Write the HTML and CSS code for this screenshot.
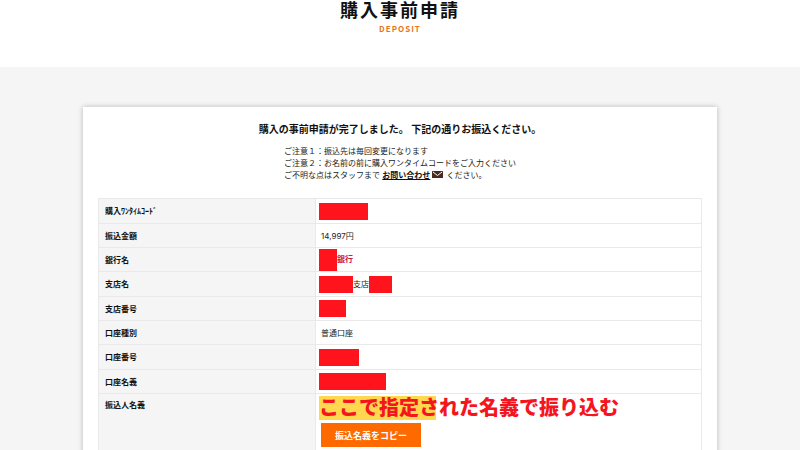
FILE: index.html
```html
<!DOCTYPE html>
<html lang="ja">
<head>
  <meta charset="UTF-8" />
  <meta name="viewport" content="width=device-width, initial-scale=1.0"/>
  <title>購入事前申請</title>
  <link rel="stylesheet" href="styles.css">
</head>
<body>
  <header class="page-header">
    <h1>購入事前申請</h1>
    <p class="sub">DEPOSIT</p>
  </header>

  <main class="content">
    <section class="card">
      <h2>購入の事前申請が完了しました。 下記の通りお振込ください。</h2>
      <div class="notes">
        <p>ご注意１：振込先は毎回変更になります</p>
        <p>ご注意２：お名前の前に購入ワンタイムコードをご入力ください</p>
        <p>ご不明な点はスタッフまで <a href="#contact">お問い合わせ<svg class="mail" viewBox="0 0 22 14" aria-hidden="true"><rect width="22" height="14" rx="1" fill="#4a2a1c"/><path d="M2 2L11 9L20 2" fill="none" stroke="#fff" stroke-width="2"/></svg></a> ください。</p>
      </div>

      <table class="info">
        <tr class="tall">
          <th scope="row">購入ﾜﾝﾀｲﾑｺｰﾄﾞ</th>
          <td><span class="mask mask-code"></span></td>
        </tr>
        <tr>
          <th scope="row">振込金額</th>
          <td>14,997円</td>
        </tr>
        <tr>
          <th scope="row">銀行名</th>
          <td class="bank"><span class="mask mask-bank"></span>銀行</td>
        </tr>
        <tr class="tall">
          <th scope="row">支店名</th>
          <td><span class="mask mask-branch"></span>支店<span class="mask mask-branch-code"></span></td>
        </tr>
        <tr>
          <th scope="row">支店番号</th>
          <td><span class="mask mask-branch-no"></span></td>
        </tr>
        <tr>
          <th scope="row">口座種別</th>
          <td>普通口座</td>
        </tr>
        <tr class="tall">
          <th scope="row">口座番号</th>
          <td><span class="mask mask-account"></span></td>
        </tr>
        <tr>
          <th scope="row">口座名義</th>
          <td><span class="mask mask-holder"></span></td>
        </tr>
        <tr class="sender">
          <th scope="row">振込人名義</th>
          <td>
            <p class="callout">ここで指定された名義で振り込む</p>
            <button type="button" class="copy-btn">振込名義をコピー</button>
          </td>
        </tr>
      </table>
    </section>
  </main>
</body>
</html>
```

FILE: styles.css
```css
* {
  box-sizing: border-box;
}
body {
  margin: 0;
  height: 100vh;
  overflow: hidden;
  font-family: Inter, "Noto Sans CJK JP", sans-serif;
  font-size: 8px;
  line-height: 12px;
  color: #222;
  background: #f5f5f5;
}
h1, h2, p {
  margin: 0;
}
.page-header {
  height: 67px;
  background: #fff;
  text-align: center;
}
.page-header h1 {
  font-size: 18px;
  line-height: 22px;
  letter-spacing: 2px;
  color: #111;
}
.page-header .sub {
  font-family: "Noto Sans CJK JP", sans-serif;
  font-size: 8px;
  line-height: 14px;
  font-weight: 700;
  letter-spacing: 1px;
  color: #e8751a;
}
.content {
  padding: 40px 83px;
}
.card {
  padding: 14px 15px 40px;
  background: #fff;
  box-shadow: 0 0 5px rgba(0, 0, 0, 0.25);
}
.card h2 {
  font-size: 10px;
  line-height: 16px;
  text-align: center;
  color: #111;
}
.notes {
  width: fit-content;
  margin: 8px auto 17px;
}
.notes a {
  color: #111;
  font-weight: 700;
}
.mail {
  width: 11px;
  height: 7px;
  margin: 0 1px 0 2px;
}
.info {
  width: 100%;
  table-layout: fixed;
  border-collapse: collapse;
}
.info th,
.info td {
  height: 24px;
  padding: 0 6px;
  border: 1px solid #e9e9e9;
  text-align: left;
  vertical-align: middle;
}
.info td {
  padding-left: 5px;
}
.info th {
  width: 36%;
  background: #f5f5f5;
  color: #111;
}
.info .tall th,
.info .tall td {
  height: 25px;
}
.info .bank {
  color: #c8203c;
  font-weight: 700;
}

/* masked values */
.mask {
  display: inline-block;
  height: 17px;
  background: #ff131c;
  vertical-align: middle;
}
.mask:first-child {
  margin-left: -2px;
}
.mask-code { width: 49px; }
.mask-bank { width: 18px; height: 22px; }
.mask-branch { width: 34px; }
.mask-branch-code { width: 23px; }
.mask-branch-no { width: 27px; }
.mask-account { width: 40px; }
.mask-holder { width: 67px; }

.info .sender th {
  padding-top: 5px;
  vertical-align: top;
}
.info .sender td {
  padding-top: 2px;
  padding-bottom: 6px;
}
.callout {
  width: fit-content;
  margin-left: -2px;
  font-size: 20px;
  line-height: 24px;
  font-weight: 900;
  color: #f5151e;
  background: linear-gradient(#ffd84f, #ffd84f) no-repeat left / 117px 100%;
}
.copy-btn {
  display: block;
  height: 24px;
  margin-top: 3px;
  padding: 0 14px;
  border: none;
  background: #ff6a00;
  color: #fff;
  font-family: inherit;
  font-size: 9px;
  font-weight: 700;
  cursor: pointer;
}
.copy-btn:hover {
  background: #e65f00;
}
```
